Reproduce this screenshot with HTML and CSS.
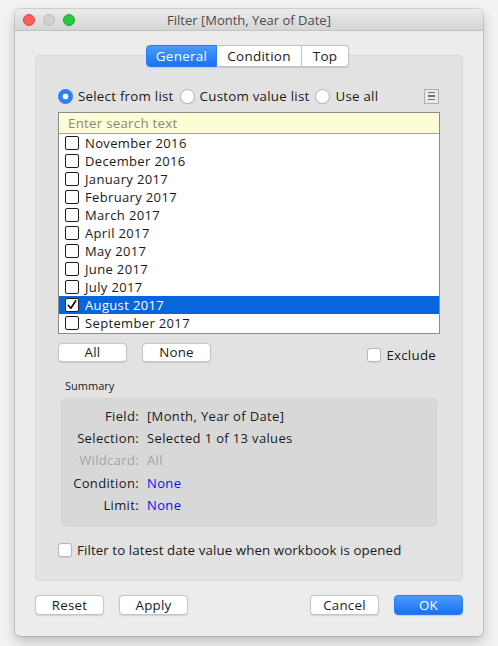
FILE: index.html
```html
<!DOCTYPE html>
<html>
<head>
<meta charset="utf-8">
<link rel="stylesheet" href="styles.css">
</head>
<body>
<div class="window">
  <div class="titlebar">
    <div class="lights">
      <span class="light red"></span>
      <span class="light gray"></span>
      <span class="light green"></span>
    </div>
    <div class="title">Filter [Month, Year of Date]</div>
  </div>
  <div class="content">
    <div class="tabs">
      <div class="tab active">General</div>
      <div class="tab">Condition</div>
      <div class="tab last">Top</div>
    </div>
    <div class="group">
      <div class="radio-row">
        <label class="radio-item"><span class="radio on"></span>Select from list</label>
        <label class="radio-item"><span class="radio"></span>Custom value list</label>
        <label class="radio-item"><span class="radio"></span>Use all</label>
        <span class="menu-btn"><i></i><i></i><i></i></span>
      </div>
      <div class="listbox">
        <div class="search">Enter search text</div>
        <div class="row"><span class="cb"></span>November 2016</div>
        <div class="row"><span class="cb"></span>December 2016</div>
        <div class="row"><span class="cb"></span>January 2017</div>
        <div class="row"><span class="cb"></span>February 2017</div>
        <div class="row"><span class="cb"></span>March 2017</div>
        <div class="row"><span class="cb"></span>April 2017</div>
        <div class="row"><span class="cb"></span>May 2017</div>
        <div class="row"><span class="cb"></span>June 2017</div>
        <div class="row"><span class="cb"></span>July 2017</div>
        <div class="row selected"><span class="cb checked"><svg width="12" height="12" viewBox="0 0 12 12"><path d="M2.2 6.3 L4.8 9.2 L9.8 1.8" fill="none" stroke="#000" stroke-width="1.6" stroke-linecap="round" stroke-linejoin="round"/></svg></span>August 2017</div>
        <div class="row"><span class="cb"></span>September 2017</div>
      </div>
      <div class="btn-row">
        <button class="btn small">All</button>
        <button class="btn small">None</button>
        <label class="exclude"><span class="cb2"></span>Exclude</label>
      </div>
      <div class="summary-label">Summary</div>
      <div class="summary">
        <div class="s-row"><span class="s-key">Field:</span><span class="s-val">[Month, Year of Date]</span></div>
        <div class="s-row"><span class="s-key">Selection:</span><span class="s-val">Selected 1 of 13 values</span></div>
        <div class="s-row dim"><span class="s-key">Wildcard:</span><span class="s-val">All</span></div>
        <div class="s-row"><span class="s-key">Condition:</span><span class="s-val link">None</span></div>
        <div class="s-row"><span class="s-key">Limit:</span><span class="s-val link">None</span></div>
      </div>
      <label class="latest"><span class="cb2"></span>Filter to latest date value when workbook is opened</label>
    </div>
    <div class="footer">
      <button class="btn">Reset</button>
      <button class="btn">Apply</button>
      <span class="spacer"></span>
      <button class="btn">Cancel</button>
      <button class="btn primary">OK</button>
    </div>
  </div>
</div>
</body>
</html>
```

FILE: styles.css
```css
* { box-sizing: border-box; }
html, body { margin: 0; padding: 0; }
body {
  width: 498px;
  height: 646px;
  background: #f3f3f3;
  font-family: "Open Sans", "Noto Sans", sans-serif;
  font-size: 13px;
  letter-spacing: 0.25px;
  color: #1a1a1a;
  overflow: hidden;
  padding: 9px 15px 0 15px;
}
.window {
  width: 468px;
  height: 627px;
  background: #ececec;
  border-radius: 5px;
  box-shadow: 0 0 0 1px rgba(0,0,0,0.12), 0 6px 14px rgba(0,0,0,0.22);
  display: flex;
  flex-direction: column;
  overflow: hidden;
}
.titlebar {
  height: 22px;
  flex: none;
  background: linear-gradient(#ebebeb, #d5d5d5);
  border-bottom: 1px solid #c3c3c3;
  display: flex;
  align-items: center;
  position: relative;
}
.lights {
  display: flex;
  gap: 8px;
  padding-left: 8px;
}
.light {
  width: 12px; height: 12px; border-radius: 50%;
  display: block;
}
.red { background: #fe5f57; border: 0.5px solid #e0443e; }
.gray { background: #d0d0d0; border: 0.5px solid #bdbdbd; }
.green { background: #28c840; border: 0.5px solid #1aab29; }
.title {
  flex: 1;
  text-align: center;
  font-size: 13px;
  letter-spacing: 0;
  color: #4d4d4d;
  margin-left: -60px;
}
.content {
  flex: 1;
  padding: 14px 20px 0 20px;
  display: flex;
  flex-direction: column;
}
.tabs {
  display: flex;
  justify-content: center;
  position: relative;
  z-index: 2;
  margin-left: -3px;
  height: 22px;
}
.tab {
  height: 22px;
  padding: 0;
  background: #fff;
  border: 1px solid #c4c4c4;
  border-left: none;
  font-size: 13.5px;
  display: flex;
  align-items: center;
  justify-content: center;
  color: #1a1a1a;
  box-shadow: 0 0.5px 1px rgba(0,0,0,0.12);
}
.tab.active {
  width: 71px;
  background: linear-gradient(#4b9bfa, #1772f4);
  border: 1px solid #2a7cf2;
  color: #fff;
  border-radius: 4px 0 0 4px;
}
.tab:nth-child(2) { width: 85px; }
.tab.last { width: 47px; border-radius: 0 4px 4px 0; }
.group {
  margin-top: -12px;
  height: 526px;
  background: #e2e2e2;
  border: 1px solid #d8d8d8;
  border-radius: 4px;
  padding: 31px 22px 0 22px;
  display: flex;
  flex-direction: column;
}
.radio-row {
  height: 18px;
  display: flex;
  align-items: center;
  font-size: 13.3px;
}
.radio-item {
  display: flex;
  align-items: center;
  margin-right: 6px;
}
.radio {
  width: 15px; height: 15px;
  border-radius: 50%;
  background: #fff;
  border: 1px solid #b4b4b4;
  margin-right: 5px;
  display: inline-block;
  box-shadow: 0 0.5px 1px rgba(0,0,0,0.1);
}
.radio.on {
  background: radial-gradient(circle, #fff 0 2.6px, #2f80f5 3.2px);
  border-color: #2a78ee;
}
.menu-btn {
  margin-left: auto;
  margin-right: 1px;
  width: 15px; height: 15px;
  border: 1px solid #b0b0b0;
  background: #e8e8e8;
  display: flex;
  flex-direction: column;
  justify-content: center;
  align-items: center;
  gap: 2px;
}
.menu-btn i {
  display: block;
  width: 7px; height: 1.5px;
  background: #6b7480;
}
.listbox {
  margin-top: 7px;
  border: 1px solid #8c8c8c;
  background: #fff;
  height: 222px;
}
.search {
  height: 21px;
  background: #fcfcd5;
  border-bottom: 1px solid #a0a0a0;
  color: #8a8a7a;
  font-size: 13.3px;
  padding-left: 9px;
  display: flex;
  align-items: center;
}
.row {
  height: 18px;
  display: flex;
  align-items: center;
  padding-left: 6px;
  font-size: 13px;
  letter-spacing: 0.35px;
  color: #1a1a1a;
}
.row.selected {
  background: #0866dc;
  color: #fff;
}
.cb {
  width: 14px; height: 14px;
  border: 1px solid #1e1e1e;
  border-radius: 2px;
  background: #fff;
  margin-right: 6px;
  display: flex;
  align-items: center;
  justify-content: center;
}
.btn-row {
  margin-top: 9px;
  display: flex;
  align-items: center;
  height: 19px;
  gap: 15px;
}
.btn {
  font-family: inherit;
  font-size: 13.3px;
  letter-spacing: 0.25px;
  height: 20px;
  width: 69px;
  background: #fff;
  border: 1px solid #c6c6c6;
  border-radius: 4px;
  box-shadow: 0 0.5px 1px rgba(0,0,0,0.12);
  color: #1a1a1a;
  padding: 0;
  line-height: 18px;
}
.btn.small { height: 19px; line-height: 17px; }
.exclude {
  margin-left: auto;
  margin-right: 4px;
  display: flex;
  align-items: center;
  font-size: 13.3px;
  margin-top: 4px;
}
.cb2 {
  width: 14px; height: 14px;
  border: 1px solid #b8b8b8;
  border-radius: 3px;
  background: #fff;
  margin-right: 5px;
  display: inline-block;
  box-shadow: 0 0.5px 1px rgba(0,0,0,0.08);
}
.summary-label {
  margin-top: 17px;
  padding-left: 7px;
  font-size: 11px;
  letter-spacing: 0;
  height: 14px;
  line-height: 14px;
}
.summary {
  margin-top: 5px;
  margin-left: 3px;
  width: 376px;
  height: 128px;
  background: #d8d8d8;
  border: 1px solid #d2d2d2;
  border-radius: 4px;
  padding-top: 6px;
}
.s-row {
  height: 22.2px;
  display: flex;
  align-items: center;
  font-size: 13px;
  letter-spacing: 0.35px;
}
.s-key {
  width: 77px;
  text-align: right;
  margin-right: 8px;
}
.s-row.dim { color: #a3a3a3; }
.link { color: #0f0fef; }
.latest {
  margin-top: 15px;
  display: flex;
  align-items: center;
  font-size: 13.3px;
  letter-spacing: 0.1px;
}
.footer {
  margin-top: 14px;
  display: flex;
  align-items: center;
  gap: 15px;
}
.footer .spacer { flex: 1; }
.btn.primary {
  background: linear-gradient(#4d9cfb, #1671f3);
  border-color: #2a7cf2;
  color: #fff;
}
```
